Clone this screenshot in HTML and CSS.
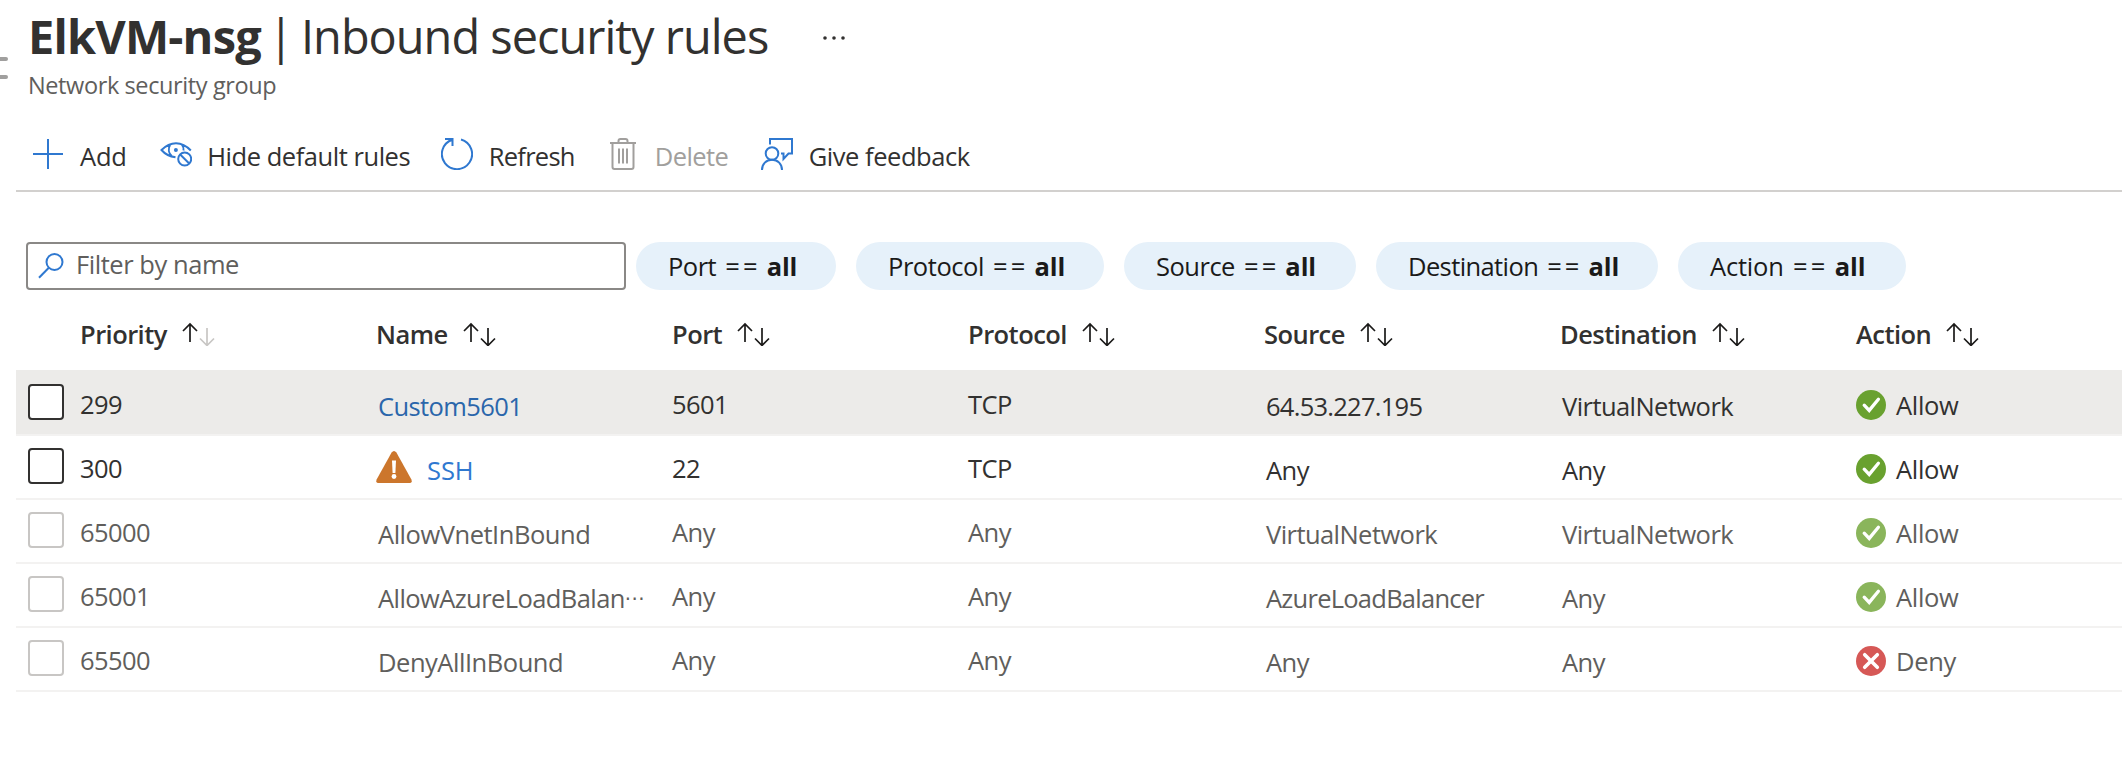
FILE: index.html
```html
<!DOCTYPE html>
<html lang="en">
<head>
<meta charset="utf-8">
<title>ElkVM-nsg | Inbound security rules</title>
<link rel="stylesheet" href="styles.css">
</head>
<body>
<svg class="defs" width="0" height="0" aria-hidden="true">
  <symbol id="sort-up" viewBox="0 0 16 24"><path d="M8 20V2M1 9l7-7 7 7" fill="none" stroke="currentColor" stroke-width="1.7"/></symbol>
  <symbol id="sort-down" viewBox="0 0 16 24"><path d="M8 6v18M1 16.5l7 7 7-7" fill="none" stroke="currentColor" stroke-width="1.7"/></symbol>
  <symbol id="ok" viewBox="0 0 30 30"><circle cx="15" cy="15" r="15" fill="currentColor"/><path d="M8.2 15.2l5 5.2 9.2-11.2" fill="none" stroke="#fff" stroke-width="3.3" stroke-linecap="round" stroke-linejoin="miter"/></symbol>
  <symbol id="deny" viewBox="0 0 30 30"><circle cx="15" cy="15" r="15" fill="currentColor"/><path d="M8.7 8.7l12.6 12.6M21.3 8.7L8.7 21.3" fill="none" stroke="#fff" stroke-width="3.6" stroke-linecap="round"/></symbol>
</svg>

<header class="header">
  <div class="menu-handle"><i></i><i></i></div>
  <h1 class="title"><b class="title-name">ElkVM-nsg</b><span class="title-bar">|</span><span class="title-page">Inbound security rules</span>
    <svg class="more" width="24" height="6" viewBox="0 0 24 6"><circle cx="3" cy="3" r="1.8"/><circle cx="12" cy="3" r="1.8"/><circle cx="21" cy="3" r="1.8"/></svg>
  </h1>
  <div class="subtitle">Network security group</div>
</header>

<nav class="toolbar">
  <button class="tool tool-add">
    <svg width="32" height="32" viewBox="0 0 32 32"><path d="M16 1v30M1 16h30"/></svg>
    <span>Add</span>
  </button>
  <button class="tool">
    <svg width="32" height="32" viewBox="0 0 32 32"><path d="M15.500 19.300C9.500 18.500 4.500 15.500 1.500 12C6 7.500 11 5.200 16 5.200c5.500 0 10.800 3 14.800 7.300M10.200 6.500c-2.200 4-1.800 8.800 1.800 12M21.800 6.500c1.700 2.200 2 4.200 1.700 6"/><circle cx="15.900" cy="12" r="2" class="solid"/><circle cx="24.700" cy="21" r="6.500"/><path d="M20.200 16.500l9 9"/></svg>
    <span class="label-hide">Hide default rules</span>
  </button>
  <button class="tool">
    <svg width="32" height="32" viewBox="0 0 32 32"><path d="M20 1.500A15.100 15.100 0 1 1 11.300 1.700M4 1h7.500v7"/></svg>
    <span class="label-refresh">Refresh</span>
  </button>
  <button class="tool tool-disabled">
    <svg width="32" height="32" viewBox="0 0 32 32"><path d="M3 5h26M5.500 5v24q0 2 2 2h17q2 0 2-2V5M11.500 5V3q0-2 2-2h5q2 0 2 2v2M12 10.500v15M16 10.500v15M20 10.500v15"/></svg>
    <span class="label-delete">Delete</span>
  </button>
  <button class="tool">
    <svg width="32" height="32" viewBox="0 0 32 32"><circle cx="11" cy="15.500" r="6.300"/><path d="M1 32c0-6 4.200-10.200 10-10.200S21 26 21 32M9 6.500V1h22v14.500h-3.500L22.500 21v-5.500H20"/></svg>
    <span class="label-feedback">Give feedback</span>
  </button>
</nav>

<section class="filters">
  <label class="search">
    <svg width="26" height="26" viewBox="0 0 26 26"><circle cx="16.500" cy="9" r="8"/><path d="M10.800 14.700L1 24.800"/></svg>
    <span>Filter by name</span>
  </label>
  <span class="pill pill-port">Port <span class="op">==</span> <b>all</b></span>
  <span class="pill pill-protocol">Protocol <span class="op">==</span> <b>all</b></span>
  <span class="pill pill-source">Source <span class="op">==</span> <b>all</b></span>
  <span class="pill pill-destination">Destination <span class="op">==</span> <b>all</b></span>
  <span class="pill pill-action">Action <span class="op">==</span> <b>all</b></span>
</section>

<main class="table">
  <div class="row head">
    <span></span>
    <span class="th">Priority<svg class="sort"><use href="#sort-up" width="16" height="24"/><use href="#sort-down" class="faded" x="17" width="16" height="24"/></svg></span>
    <span class="th">Name<svg class="sort"><use href="#sort-up" width="16" height="24"/><use href="#sort-down" x="17" width="16" height="24"/></svg></span>
    <span class="th">Port<svg class="sort"><use href="#sort-up" width="16" height="24"/><use href="#sort-down" x="17" width="16" height="24"/></svg></span>
    <span class="th">Protocol<svg class="sort"><use href="#sort-up" width="16" height="24"/><use href="#sort-down" x="17" width="16" height="24"/></svg></span>
    <span class="th">Source<svg class="sort"><use href="#sort-up" width="16" height="24"/><use href="#sort-down" x="17" width="16" height="24"/></svg></span>
    <span class="th">Destination<svg class="sort"><use href="#sort-up" width="16" height="24"/><use href="#sort-down" x="17" width="16" height="24"/></svg></span>
    <span class="th">Action<svg class="sort"><use href="#sort-up" width="16" height="24"/><use href="#sort-down" x="17" width="16" height="24"/></svg></span>
  </div>

  <div class="row selected">
    <i class="box"></i><span class="td">299</span><span class="td low link text-custom">Custom5601</span><span class="td">5601</span><span class="td">TCP</span><span class="td low text-ip">64.53.227.195</span><span class="td low">VirtualNetwork</span>
    <span class="td action"><svg class="status"><use href="#ok"/></svg>Allow</span>
  </div>
  <div class="row">
    <i class="box"></i><span class="td">300</span>
    <span class="td low link warn"><svg width="36" height="32" viewBox="0 0 36 32"><path d="M15.600 1.500q2.400-3 4.800 0l15 27q1.200 3.500-2 3.500H2.600q-3.200 0-2-3.500z" fill="#cc762c"/><path d="M16 9.500h4l-.6 12.500h-2.800z" fill="#fff"/><circle cx="18" cy="25.500" r="2.400" fill="#fff"/></svg>SSH</span>
    <span class="td">22</span><span class="td">TCP</span><span class="td low">Any</span><span class="td low">Any</span>
    <span class="td action"><svg class="status"><use href="#ok"/></svg>Allow</span>
  </div>
  <div class="row default">
    <i class="box"></i><span class="td">65000</span><span class="td low text-name">AllowVnetInBound</span><span class="td">Any</span><span class="td">Any</span><span class="td low">VirtualNetwork</span><span class="td low">VirtualNetwork</span>
    <span class="td action"><svg class="status"><use href="#ok"/></svg>Allow</span>
  </div>
  <div class="row default">
    <i class="box"></i><span class="td">65001</span><span class="td low text-name text-cut">AllowAzureLoadBalan<span class="dots">⋯</span></span><span class="td">Any</span><span class="td">Any</span><span class="td low text-balancer">AzureLoadBalancer</span><span class="td low">Any</span>
    <span class="td action"><svg class="status"><use href="#ok"/></svg>Allow</span>
  </div>
  <div class="row default">
    <i class="box"></i><span class="td">65500</span><span class="td low text-name">DenyAllInBound</span><span class="td">Any</span><span class="td">Any</span><span class="td low">Any</span><span class="td low">Any</span>
    <span class="td action"><svg class="status denied"><use href="#deny"/></svg>Deny</span>
  </div>
</main>
</body>
</html>
```
FILE: styles.css
```css
* { box-sizing: border-box; }
body {
  margin: 0;
  background: #fff;
  color: #323130;
  font-family: "Open Sans", "Noto Sans", sans-serif;
  font-size: 25.5px;
  letter-spacing: -0.5px;
  white-space: nowrap;
  overflow: hidden;
}
svg { display: block; flex: none; }
.defs { position: absolute; }

.header { position: relative; height: 98px; padding-left: 28px; }
.menu-handle {
  position: absolute; left: 0; top: 57px;
  display: grid; gap: 14px;
}
.menu-handle i { width: 8px; height: 4px; background: #a09f9e; border-radius: 0 2px 2px 0; }
.title {
  display: flex; align-items: center;
  height: 72px; margin: 0;
  font-size: 46.9px; line-height: 72px; font-weight: 400;
}
.title-name { font-weight: 700; letter-spacing: -0.8px; width: 234px; }
.title-bar { width: 39px; padding-left: 6px; letter-spacing: 0; }
.title-page { letter-spacing: -0.98px; width: 470px; }
.more { margin-left: 51px; margin-top: 4px; fill: #323130; }
.subtitle { font-size: 23.5px; line-height: 26px; letter-spacing: -0.39px; color: #605e5c; }

.toolbar {
  display: flex; align-items: center; gap: 33px;
  height: 94px; margin-left: 16px; padding: 20px 0 0 16px;
  border-bottom: 2px solid #d2d0ce;
}
.tool {
  display: flex; align-items: center; gap: 15.5px;
  padding: 0; border: 0; background: none;
  font: inherit; letter-spacing: -0.5px; color: inherit;
}
.tool svg { fill: none; stroke: #2f78d0; stroke-width: 2; }
.tool svg .solid { fill: #2f78d0; stroke: none; }
.tool span { line-height: 32px; padding-top: 4px; }
.tool-add { gap: 16px; letter-spacing: -0.2px; }
.label-hide { width: 201px; letter-spacing: -0.46px; }
.label-refresh { width: 85.5px; letter-spacing: -0.74px; }
.label-delete { width: 73.5px; letter-spacing: -0.6px; }
.label-feedback { letter-spacing: -0.46px; }
.tool-disabled { color: #a19f9d; }
.tool-disabled svg { stroke: #a19f9d; }

.filters { display: flex; align-items: center; height: 48px; margin: 50px 0 0 26px; }
.search {
  display: flex; align-items: center;
  width: 600px; height: 48px; margin-right: 10px; padding-left: 10px;
  border: 2px solid #8a8886; border-radius: 4px;
  color: #605e5c; letter-spacing: -0.45px;
}
.search svg { fill: none; stroke: #2f78d0; stroke-width: 2; }
.search span { padding-left: 12px; line-height: 44px; margin-top: -4px; }
.pill {
  height: 48px; padding-left: 32px; margin-right: 20px;
  border-radius: 24px; background: #e6f1fa; color: #1b1a19;
  line-height: 48px;
}
.pill b { font-weight: 700; letter-spacing: -0.1px; }
.op { margin: 0 0 0 3px; letter-spacing: 3px; }
.pill-port { width: 200px; }
.pill-protocol { width: 248px; letter-spacing: -0.45px; }
.pill-source { width: 232px; }
.pill-destination { width: 282px; letter-spacing: -0.6px; }
.pill-action { width: 228px; letter-spacing: -0.2px; }

.row {
  display: grid; grid-template-columns: 64px repeat(6, 296px) 1fr;
  height: 64px; margin-left: 16px;
  border-bottom: 2px solid #f3f2f1;
}
.head { height: 80px; border: 0; }
.th {
  display: flex; align-items: center;
  height: 48px; margin-top: 20px; line-height: 48px;
  font-weight: 600; letter-spacing: -0.55px;
}
.sort { width: 34px; height: 24px; margin-left: 15px; color: #1b1a19; }
.faded { color: #c8c6c4; }
.selected { height: 66px; padding-top: 2px; background: #ecebe9; }
.box {
  width: 36px; height: 36px; margin: 12px 0 0 12px;
  border: 2px solid #323130; border-radius: 4px; background: #fff;
}
.td { line-height: 62px; padding-top: 1px; letter-spacing: -0.56px; }
.low { padding-top: 3px; margin-left: 2px; }
.link { color: #2f78d0; }
.selected .link { color: #2a66ab; }
.text-custom { letter-spacing: -0.6px; }
.text-ip { letter-spacing: -0.74px; }
.text-name { letter-spacing: -0.47px; }
.text-balancer { letter-spacing: -0.75px; }
.text-cut { display: flex; letter-spacing: -0.58px; }
.dots { width: 20px; font-family: "DejaVu Sans", sans-serif; font-size: 20px; }
.warn { display: flex; align-items: center; line-height: 56px; letter-spacing: -0.1px; }
.warn svg { margin: -6px 15px 0 -2px; }
.action { display: flex; align-items: center; padding-top: 0; letter-spacing: -0.32px; }
.status { width: 30px; height: 30px; margin-right: 10px; color: #69a12f; }
.default { color: #605e5c; }
.default .box { border-color: #c8c6c4; }
.default .status { color: #8ab55b; }
.default .denied { color: #d65856; }
```
